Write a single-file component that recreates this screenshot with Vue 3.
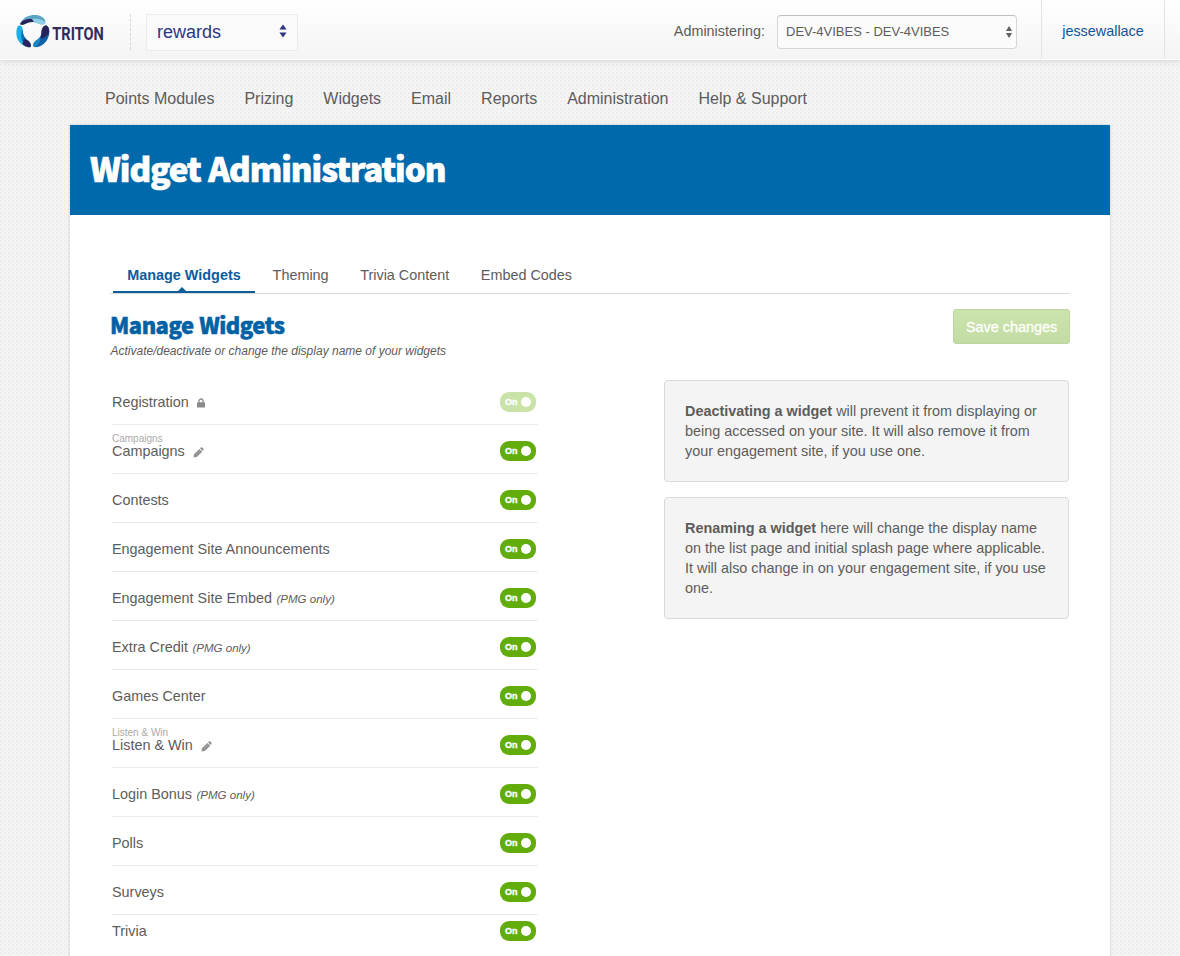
<script setup>
const nav = ['Points Modules', 'Prizing', 'Widgets', 'Email', 'Reports', 'Administration', 'Help & Support']
const tabs = ['Manage Widgets', 'Theming', 'Trivia Content', 'Embed Codes']
const widgets = [
  { name: 'Registration', locked: true },
  { name: 'Campaigns', label: 'Campaigns' },
  { name: 'Contests' },
  { name: 'Engagement Site Announcements' },
  { name: 'Engagement Site Embed', note: '(PMG only)' },
  { name: 'Extra Credit', note: '(PMG only)' },
  { name: 'Games Center' },
  { name: 'Listen & Win', label: 'Listen & Win' },
  { name: 'Login Bonus', note: '(PMG only)' },
  { name: 'Polls' },
  { name: 'Surveys' },
  { name: 'Trivia' },
]
</script>

<template>
  <div class="page">
    <header class="topbar">
      <svg class="logo" width="92" height="40" viewBox="0 0 92 40">
        <path fill="#5ba3c4" d="M4.5 11C8 4 15 2.500 20 3c6 .5 10 4 9.300 8-.6 2-4 1.500-7 .5C16 9.500 13 9.500 9 12c-3 1.500-5.500 1-4.500-1z" />
        <path fill="#8ed0e5" d="M15 7c6-1 13 .5 14.300 4-.6 2-4 1.500-7 .5-3-1-5.300-1.800-7.800-1.500z" />
        <path fill="#29235c" d="M4.500 11C6 8.300 11 6.500 16 7l2 3c-3.500-.4-6 .5-9 2-3 1.500-5.500 1-4.500-1z" />
        <path fill="#1bb1e7" d="M2 14c3.500-1.500 4.500 1 4.700 5 .3 5 2 7 5.800 10 2.500 2 3.500 5.500 1.500 6.200C10 36 2.500 31.500.8 25 0 21 .2 16.500 2 14z" />
        <path fill="#0871b5" d="M6.600 17c.3 7 2.500 9 5.900 12l-4 3.500C5.500 29 4 23 6.600 17z" />
        <path fill="#29235c" d="M8 26.500c1 1 2.700 1.500 4.500 2.500 2.500 2 3.500 5.500 1.500 6.200-2.500.3-5-1-7.500-3z" />
        <path fill="#0c62a9" d="M31 13.700c2.800 2.300 3.200 8 .7 13-2.400 5-8.700 9.300-13.200 8.300-2.200-.7-1-4.500 1-6 4.500-3 5.700-5 6-9 .2-4 2.500-7.500 5.500-6.300z" />
        <path fill="#29235c" d="M31 13.700c2.500 2.200 2.700 5 1.500 8.300-2 2.200-4.200 4-7.200 5-1.200 0 .1-5 .2-7 .2-4 2.500-7.500 5.500-6.300z" />
        <path fill="#1885c7" d="M18.500 35c-2.200-.7-1-4.500 1-6 2-1.500 3.500-2.600 4.500-4 .8 4-1 8-5.500 10z" />
        <text class="logo-text" x="36.300" y="27.700" textLength="51.500" lengthAdjust="spacingAndGlyphs">TRITON</text>
      </svg>
      <div class="divider"></div>
      <div class="product">
        <span>rewards</span>
        <svg width="8" height="14" viewBox="0 0 8 14"><path fill="#2c3683" d="M.4 5.500 4 .5l3.600 5zM.4 8.500h7.200l-3.600 5z" /></svg>
      </div>
      <span class="admin-label">Administering:</span>
      <div class="account">
        <span>DEV-4VIBES - DEV-4VIBES</span>
        <svg width="6" height="12" viewBox="0 0 6 12"><path fill="#606060" d="M0 5 3 0l3 5zM0 7h6l-3 5z" /></svg>
      </div>
      <a class="user">jessewallace</a>
    </header>

    <nav class="nav"><a v-for="n in nav" :key="n">{{ n }}</a></nav>

    <main class="panel">
      <div class="banner"><h1>Widget Administration</h1></div>
      <div class="content">
        <div class="tabs">
          <a v-for="(t, i) in tabs" :key="t" :class="{ active: i === 0 }">{{ t }}</a>
        </div>
        <div class="heading">
          <div>
            <h2>Manage Widgets</h2>
            <p>Activate/deactivate or change the display name of your widgets</p>
          </div>
          <button>Save changes</button>
        </div>
        <div class="columns">
          <ul>
            <li v-for="w in widgets" :key="w.name">
              <div class="title">
                <small v-if="w.label">{{ w.label }}</small>
                <span>{{ w.name }}</span>
                <em v-if="w.note">{{ w.note }}</em>
                <svg v-if="w.locked" class="lock" width="8" height="10" viewBox="0 0 8 10">
                  <path d="M2 5V3a2 2 0 0 1 4 0v2" fill="none" stroke="#8b8b8b" stroke-width="1.300" />
                  <rect y="4.300" width="8" height="5.200" rx=".6" fill="#8b8b8b" />
                </svg>
                <svg v-if="w.label" class="pencil" width="11" height="11" viewBox="0 0 11 11">
                  <path fill="#8f8f8f" d="M.4 10.600 1 7.200 6.400 1.900l2.800 2.800L3.800 10zM7 1.300l.9-.8q.7-.5 1.400.1l1.100 1.200q.6.600 0 1.300l-.8.900z" />
                  <path stroke="#c4c4c4" stroke-width=".5" d="m2.800 7.800 4-3.900M1.200 8.900l1 1" />
                </svg>
              </div>
              <div class="toggle" :class="{ disabled: w.locked }"><b>On</b><i></i></div>
            </li>
          </ul>
          <aside>
            <p><strong>Deactivating a widget</strong> will prevent it from displaying or being accessed on your site. It will also remove it from your engagement site, if you use one.</p>
            <p><strong>Renaming a widget</strong> here will change the display name on the list page and initial splash page where applicable. It will also change in on your engagement site, if you use one.</p>
          </aside>
        </div>
      </div>
    </main>
  </div>
</template>

<style>
body { overflow: hidden; }
</style>

<style scoped>
* { box-sizing: border-box; }
.page {
  height: 956px;
  overflow: hidden;
  display: flex;
  flex-direction: column;
  font: 14.4px/20px "Liberation Sans", Arial, sans-serif;
  color: #5c5c5c;
  background-color: #f5f5f5;
  background-image: radial-gradient(circle at 1px 1px, #ededed 0.8px, transparent 1.300px), radial-gradient(circle at 3px 3px, #f1f1f1 0.6px, transparent 1.200px);
  background-size: 4px 4px;
}
.topbar {
  flex: none;
  height: 60px;
  display: flex;
  align-items: center;
  padding-right: 15px;
  background: linear-gradient(#fff, #f4f4f4);
  border-bottom: 1px solid #fff;
  box-shadow: 0 1px 6px rgba(0, 0, 0, 0.12);
}
.logo { margin: 5px 0 0 16px; overflow: visible; }
.logo-text { font: bold 18px Roboto, sans-serif; fill: #302b5b; }
.divider { height: 36px; margin: 5px 15px 0 22px; border-left: 1px dashed #d5d5d5; }
.product {
  width: 152px;
  height: 37px;
  margin-top: 5px;
  padding: 0 10px;
  display: flex;
  align-items: center;
  justify-content: space-between;
  border: 1px solid #ececec;
  background: #fafafa;
  color: #2c3683;
  font-size: 18px;
}
.product svg { margin-top: -3px; }
.admin-label { margin: 3px 12px 0 auto; }
.account {
  width: 240px;
  height: 34px;
  margin-top: 5px;
  padding: 0 4px 0 8px;
  display: flex;
  align-items: center;
  justify-content: space-between;
  font-size: 13px;
  border: 1px solid #d6d6d6;
  border-top-color: #c0c0c0;
  border-radius: 4px;
  background: #fbfbfb;
}
.account span { margin-top: -1px; }
.user {
  width: 124px;
  height: 59px;
  margin-left: 24px;
  padding-top: 2px;
  line-height: 59px;
  text-align: center;
  color: #0b569b;
  border: solid #e3e3e3;
  border-width: 0 1px;
}
.nav {
  flex: none;
  height: 65px;
  padding: 29px 105px 0;
  display: flex;
  gap: 30px;
  font-size: 16px;
}
.panel {
  flex: none;
  width: 1040px;
  height: 840px;
  margin: 0 auto;
  background: #fff;
  box-shadow: 0 0 3px rgba(0, 0, 0, 0.17);
}
.banner { height: 90px; padding: 0 20px; background: #0069ac; display: flex; align-items: center; }
h1, h2 { margin: 0; font-family: "Noto Sans CJK SC", sans-serif; font-weight: 900; white-space: nowrap; }
h1 { margin-top: -4px; font-size: 33px; line-height: 40px; letter-spacing: -1px; word-spacing: 1px; color: #fff; -webkit-text-stroke: 0.7px #fff; }
h2 { font-size: 22px; line-height: 28px; letter-spacing: -0.5px; word-spacing: 1px; color: #0061a5; -webkit-text-stroke: 0.5px #0061a5; }
.content { padding: 40px 40px 0; }
.tabs {
  height: 39px;
  padding-left: 3px;
  display: flex;
  border-bottom: 1px solid #d9d9d9;
}
.tabs a { height: 38px; padding: 10px 14px 0; margin-right: 3.600px; }
.tabs a.active {
  position: relative;
  width: 142px;
  text-align: center;
  font-weight: bold;
  color: #0b5c9e;
  border-bottom: 2px solid #0b5f9b;
}
.tabs a.active::after {
  content: "";
  position: absolute;
  left: 65px;
  bottom: 0;
  border: 4px solid transparent;
  border-top: 0;
  border-bottom-color: #0b5f9b;
}
.heading { height: 82px; display: flex; justify-content: space-between; padding-top: 15px; }
.heading h2 { margin-top: 1px; }
.heading p { margin: 4px 0 0 0.500px; font-size: 12px; line-height: 18px; font-style: italic; }
button {
  width: 117px;
  height: 35px;
  padding: 0;
  font: 14.400px "Liberation Sans", Arial, sans-serif;
  color: #fff;
  -webkit-text-stroke: 0.3px #fff;
  background: linear-gradient(#cbe4ac, #c2dca3);
  border: 1px solid #bdd5a0;
  border-radius: 3px;
}
.columns { display: flex; justify-content: space-between; padding: 0 1px 0 2px; }
ul { width: 426px; margin: 0; padding: 0; list-style: none; }
li {
  height: 49px;
  padding: 4px 2px 0 0;
  display: flex;
  align-items: center;
  justify-content: space-between;
  border-bottom: 1px solid #ebebeb;
}
li:last-child { height: 32px; padding-top: 0; border: 0; }
.title { position: relative; height: 20px; }
.title em { margin-left: 4.500px; font-size: 11.520px; }
.title small { position: absolute; top: -8px; left: 0; font-size: 10px; line-height: 12px; white-space: nowrap; color: #aaa; }
.lock { margin-left: 8.500px; vertical-align: -1px; }
.pencil { margin-left: 8px; vertical-align: -2px; }
.toggle {
  width: 36px;
  height: 20px;
  padding: 0 5px;
  display: flex;
  align-items: center;
  justify-content: space-between;
  border-radius: 9px;
  background: #62ac0b;
  color: #fff;
  font: bold 9px/20px "Liberation Sans", Arial, sans-serif;
  -webkit-text-stroke: 0.35px #fff;
}
.toggle i { width: 10px; height: 10px; border-radius: 50%; background: #fff; }
.disabled { background: #c8e2a8; }
aside { width: 405px; padding-top: 4px; }
aside p {
  margin: 0 0 15px;
  padding: 20px;
  background: #f4f4f4;
  border: 1px solid #dadada;
  border-radius: 4px;
}
</style>
